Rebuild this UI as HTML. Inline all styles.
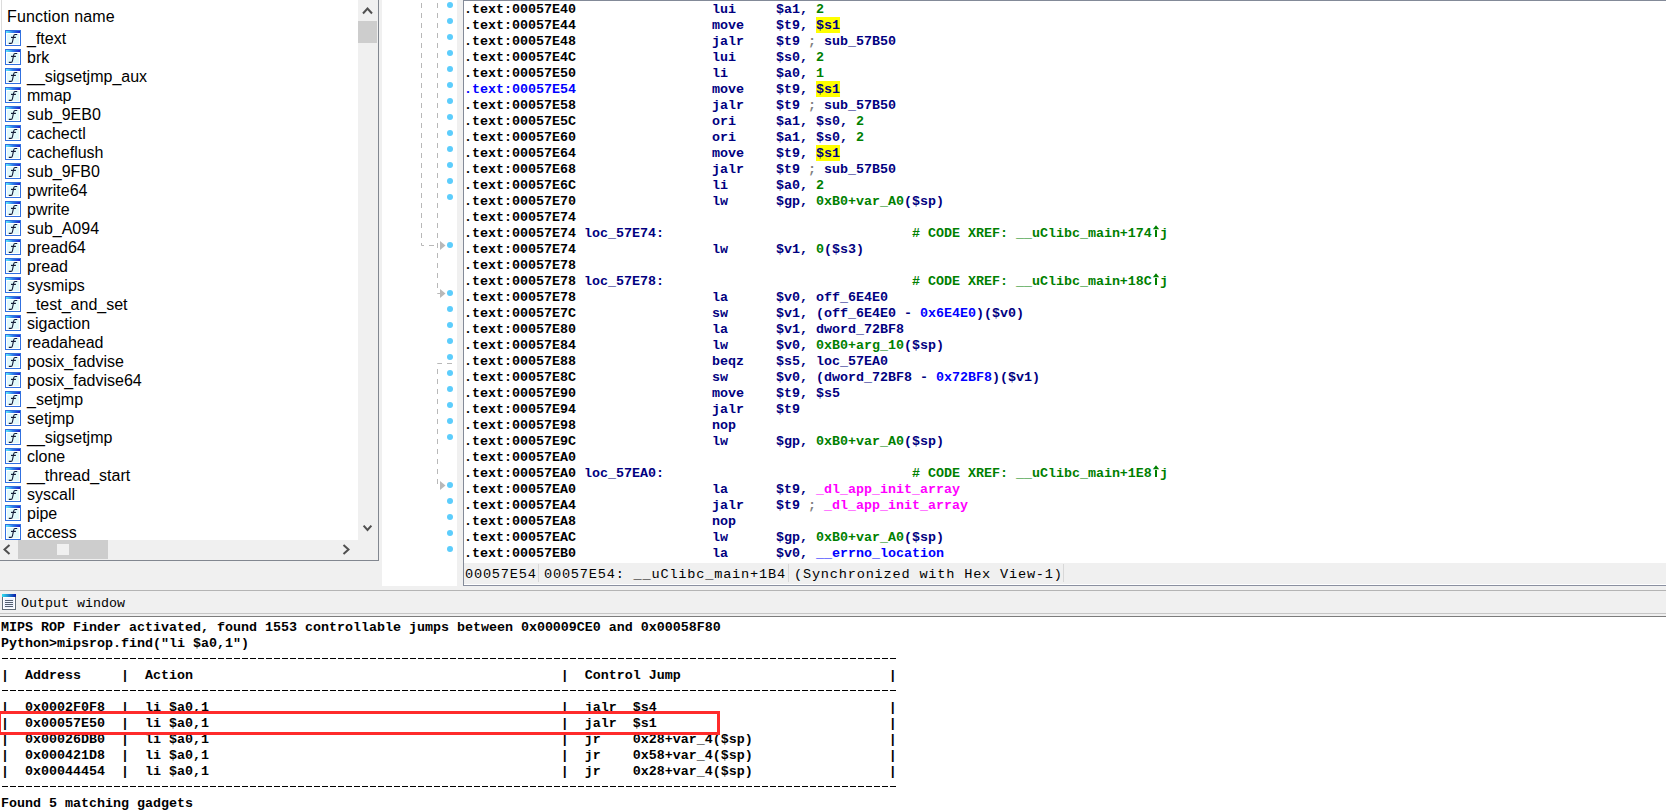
<!DOCTYPE html>
<html><head><meta charset="utf-8">
<style>
*{margin:0;padding:0;box-sizing:border-box}
html,body{width:1666px;height:812px;overflow:hidden;background:#f0f0f0;position:relative}
.abs{position:absolute}
/* left panel */
#lp{position:absolute;left:0;top:0;width:379px;height:561px;background:#f0f0f0;border-right:1px solid #828790;border-bottom:1px solid #828790}
#list{position:absolute;left:0;top:0;width:358px;height:540px;background:#fff;overflow:hidden;border-left:1px solid #e3e3e3;border-left-width:0}
#lborder{position:absolute;left:1px;top:0;width:1px;height:539px;background:#dcdcdc}
.fh{position:absolute;left:7px;top:7px;letter-spacing:0.15px;font:16px "Liberation Sans",sans-serif;color:#000;line-height:20px;white-space:pre}
.fi{position:absolute;left:5px;width:16px;height:16px}
.fi svg{display:block}
.ft{position:absolute;left:27px;font:16px "Liberation Sans",sans-serif;color:#000;line-height:19px;white-space:pre;margin-top:-1px}
#vsb{position:absolute;left:358px;top:0;width:20px;height:540px;background:#f0f0f0}
#vth{position:absolute;left:358px;top:21px;width:19px;height:22px;background:#cdcdcd}
#hsb{position:absolute;left:0;top:540px;width:358px;height:20px;background:#f0f0f0}
#hth{position:absolute;left:18px;top:540px;width:90px;height:19px;background:#cdcdcd}
#hsq{position:absolute;left:57px;top:544px;width:12px;height:11px;background:#f0f0f0}
/* graph area */
#graph{position:absolute;left:382px;top:0;width:75px;height:586px;background:#fff}
.dot{position:absolute;left:447px;width:6px;height:6px;border-radius:3px;background:#5ccdfc}
/* disasm */
#dis{position:absolute;left:463px;top:0;width:1203px;height:586px;background:#fff;border-left:1px solid #838a98;border-top:1px solid #838a98;border-bottom:1px solid #8a90a0}
.dr{position:absolute;left:464px;padding-top:1px;height:17px;font:bold 13.333px "Liberation Mono",monospace;line-height:16px;white-space:pre;color:#000}
.a{color:#000}.ca{color:#0000ff}.n{color:#000080}.g{color:#008000}.k{color:#808080}.b{color:#0000ff}.m{color:#ff00ff}.up{display:inline-block;width:8px;height:16px;vertical-align:top;margin-top:-1px}.up svg{display:block}
.y{background:#ffff00;color:#000080;padding-top:1px}
#sbar{position:absolute;left:464px;top:563px;width:1202px;height:21px;background:#f0f0f0}
.st{position:absolute;top:564px;height:22px;font:13.6px "Liberation Mono",monospace;letter-spacing:0.8px;line-height:22px;white-space:pre;color:#000}
.sdiv{position:absolute;top:564px;width:1px;height:18px;background:#d8d8d8}
/* output */
#l590{position:absolute;left:0;top:590px;width:1666px;height:1px;background:#b4b4b4}
#l613{position:absolute;left:0;top:613px;width:1666px;height:1px;background:#c6c6c6}
#l616{position:absolute;left:0;top:616px;width:1666px;height:1px;background:#7c7c7c}
#out{position:absolute;left:0;top:617px;width:1666px;height:195px;background:#fff}
.ot{position:absolute;left:21px;top:594px;font:13.333px "Liberation Mono",monospace;line-height:20px;white-space:pre;color:#000}
.or{position:absolute;left:1px;height:16px;font:bold 13.333px "Liberation Mono",monospace;line-height:16px;white-space:pre;color:#000}
.dash{position:absolute;left:2px;width:896px;height:1px;background:repeating-linear-gradient(to right,#000 0 6px,transparent 6px 8px)}
#red{position:absolute;left:-2px;top:711px;width:722px;height:24px;border:3px solid #ff2b2b}
</style></head><body>
<div id="lp"></div>
<div id="list"></div>
<div id="lborder"></div>
<div class="fh">Function name</div>
<div class="fi" style="top:30px"><svg width="16" height="16" viewBox="0 0 16 16"><defs><linearGradient id="tb" x1="0" x2="1"><stop offset="0" stop-color="#5ff0ff"/><stop offset="0.5" stop-color="#2a7ae8"/><stop offset="1" stop-color="#2222c8"/></linearGradient></defs><rect x="0" y="0" width="16" height="16" fill="#3070e0"/><rect x="1" y="1" width="14" height="2" fill="url(#tb)"/><rect x="1" y="3" width="14" height="12" fill="#fff"/><rect x="2" y="4" width="12" height="10" fill="#e2f9fb"/><path d="M12.2 4.5 H10 Q9 4.5 8.7 6 L7.4 12 Q7.1 13.4 6 13.4 H3.8" fill="none" stroke="#141c38" stroke-width="1.15"/><path d="M6 7.4 H10.9" stroke="#141c38" stroke-width="1.2"/></svg></div><div class="ft" style="top:30px">_ftext</div>
<div class="fi" style="top:49px"><svg width="16" height="16" viewBox="0 0 16 16"><defs><linearGradient id="tb" x1="0" x2="1"><stop offset="0" stop-color="#5ff0ff"/><stop offset="0.5" stop-color="#2a7ae8"/><stop offset="1" stop-color="#2222c8"/></linearGradient></defs><rect x="0" y="0" width="16" height="16" fill="#3070e0"/><rect x="1" y="1" width="14" height="2" fill="url(#tb)"/><rect x="1" y="3" width="14" height="12" fill="#fff"/><rect x="2" y="4" width="12" height="10" fill="#e2f9fb"/><path d="M12.2 4.5 H10 Q9 4.5 8.7 6 L7.4 12 Q7.1 13.4 6 13.4 H3.8" fill="none" stroke="#141c38" stroke-width="1.15"/><path d="M6 7.4 H10.9" stroke="#141c38" stroke-width="1.2"/></svg></div><div class="ft" style="top:49px">brk</div>
<div class="fi" style="top:68px"><svg width="16" height="16" viewBox="0 0 16 16"><defs><linearGradient id="tb" x1="0" x2="1"><stop offset="0" stop-color="#5ff0ff"/><stop offset="0.5" stop-color="#2a7ae8"/><stop offset="1" stop-color="#2222c8"/></linearGradient></defs><rect x="0" y="0" width="16" height="16" fill="#3070e0"/><rect x="1" y="1" width="14" height="2" fill="url(#tb)"/><rect x="1" y="3" width="14" height="12" fill="#fff"/><rect x="2" y="4" width="12" height="10" fill="#e2f9fb"/><path d="M12.2 4.5 H10 Q9 4.5 8.7 6 L7.4 12 Q7.1 13.4 6 13.4 H3.8" fill="none" stroke="#141c38" stroke-width="1.15"/><path d="M6 7.4 H10.9" stroke="#141c38" stroke-width="1.2"/></svg></div><div class="ft" style="top:68px">__sigsetjmp_aux</div>
<div class="fi" style="top:87px"><svg width="16" height="16" viewBox="0 0 16 16"><defs><linearGradient id="tb" x1="0" x2="1"><stop offset="0" stop-color="#5ff0ff"/><stop offset="0.5" stop-color="#2a7ae8"/><stop offset="1" stop-color="#2222c8"/></linearGradient></defs><rect x="0" y="0" width="16" height="16" fill="#3070e0"/><rect x="1" y="1" width="14" height="2" fill="url(#tb)"/><rect x="1" y="3" width="14" height="12" fill="#fff"/><rect x="2" y="4" width="12" height="10" fill="#e2f9fb"/><path d="M12.2 4.5 H10 Q9 4.5 8.7 6 L7.4 12 Q7.1 13.4 6 13.4 H3.8" fill="none" stroke="#141c38" stroke-width="1.15"/><path d="M6 7.4 H10.9" stroke="#141c38" stroke-width="1.2"/></svg></div><div class="ft" style="top:87px">mmap</div>
<div class="fi" style="top:106px"><svg width="16" height="16" viewBox="0 0 16 16"><defs><linearGradient id="tb" x1="0" x2="1"><stop offset="0" stop-color="#5ff0ff"/><stop offset="0.5" stop-color="#2a7ae8"/><stop offset="1" stop-color="#2222c8"/></linearGradient></defs><rect x="0" y="0" width="16" height="16" fill="#3070e0"/><rect x="1" y="1" width="14" height="2" fill="url(#tb)"/><rect x="1" y="3" width="14" height="12" fill="#fff"/><rect x="2" y="4" width="12" height="10" fill="#e2f9fb"/><path d="M12.2 4.5 H10 Q9 4.5 8.7 6 L7.4 12 Q7.1 13.4 6 13.4 H3.8" fill="none" stroke="#141c38" stroke-width="1.15"/><path d="M6 7.4 H10.9" stroke="#141c38" stroke-width="1.2"/></svg></div><div class="ft" style="top:106px">sub_9EB0</div>
<div class="fi" style="top:125px"><svg width="16" height="16" viewBox="0 0 16 16"><defs><linearGradient id="tb" x1="0" x2="1"><stop offset="0" stop-color="#5ff0ff"/><stop offset="0.5" stop-color="#2a7ae8"/><stop offset="1" stop-color="#2222c8"/></linearGradient></defs><rect x="0" y="0" width="16" height="16" fill="#3070e0"/><rect x="1" y="1" width="14" height="2" fill="url(#tb)"/><rect x="1" y="3" width="14" height="12" fill="#fff"/><rect x="2" y="4" width="12" height="10" fill="#e2f9fb"/><path d="M12.2 4.5 H10 Q9 4.5 8.7 6 L7.4 12 Q7.1 13.4 6 13.4 H3.8" fill="none" stroke="#141c38" stroke-width="1.15"/><path d="M6 7.4 H10.9" stroke="#141c38" stroke-width="1.2"/></svg></div><div class="ft" style="top:125px">cachectl</div>
<div class="fi" style="top:144px"><svg width="16" height="16" viewBox="0 0 16 16"><defs><linearGradient id="tb" x1="0" x2="1"><stop offset="0" stop-color="#5ff0ff"/><stop offset="0.5" stop-color="#2a7ae8"/><stop offset="1" stop-color="#2222c8"/></linearGradient></defs><rect x="0" y="0" width="16" height="16" fill="#3070e0"/><rect x="1" y="1" width="14" height="2" fill="url(#tb)"/><rect x="1" y="3" width="14" height="12" fill="#fff"/><rect x="2" y="4" width="12" height="10" fill="#e2f9fb"/><path d="M12.2 4.5 H10 Q9 4.5 8.7 6 L7.4 12 Q7.1 13.4 6 13.4 H3.8" fill="none" stroke="#141c38" stroke-width="1.15"/><path d="M6 7.4 H10.9" stroke="#141c38" stroke-width="1.2"/></svg></div><div class="ft" style="top:144px">cacheflush</div>
<div class="fi" style="top:163px"><svg width="16" height="16" viewBox="0 0 16 16"><defs><linearGradient id="tb" x1="0" x2="1"><stop offset="0" stop-color="#5ff0ff"/><stop offset="0.5" stop-color="#2a7ae8"/><stop offset="1" stop-color="#2222c8"/></linearGradient></defs><rect x="0" y="0" width="16" height="16" fill="#3070e0"/><rect x="1" y="1" width="14" height="2" fill="url(#tb)"/><rect x="1" y="3" width="14" height="12" fill="#fff"/><rect x="2" y="4" width="12" height="10" fill="#e2f9fb"/><path d="M12.2 4.5 H10 Q9 4.5 8.7 6 L7.4 12 Q7.1 13.4 6 13.4 H3.8" fill="none" stroke="#141c38" stroke-width="1.15"/><path d="M6 7.4 H10.9" stroke="#141c38" stroke-width="1.2"/></svg></div><div class="ft" style="top:163px">sub_9FB0</div>
<div class="fi" style="top:182px"><svg width="16" height="16" viewBox="0 0 16 16"><defs><linearGradient id="tb" x1="0" x2="1"><stop offset="0" stop-color="#5ff0ff"/><stop offset="0.5" stop-color="#2a7ae8"/><stop offset="1" stop-color="#2222c8"/></linearGradient></defs><rect x="0" y="0" width="16" height="16" fill="#3070e0"/><rect x="1" y="1" width="14" height="2" fill="url(#tb)"/><rect x="1" y="3" width="14" height="12" fill="#fff"/><rect x="2" y="4" width="12" height="10" fill="#e2f9fb"/><path d="M12.2 4.5 H10 Q9 4.5 8.7 6 L7.4 12 Q7.1 13.4 6 13.4 H3.8" fill="none" stroke="#141c38" stroke-width="1.15"/><path d="M6 7.4 H10.9" stroke="#141c38" stroke-width="1.2"/></svg></div><div class="ft" style="top:182px">pwrite64</div>
<div class="fi" style="top:201px"><svg width="16" height="16" viewBox="0 0 16 16"><defs><linearGradient id="tb" x1="0" x2="1"><stop offset="0" stop-color="#5ff0ff"/><stop offset="0.5" stop-color="#2a7ae8"/><stop offset="1" stop-color="#2222c8"/></linearGradient></defs><rect x="0" y="0" width="16" height="16" fill="#3070e0"/><rect x="1" y="1" width="14" height="2" fill="url(#tb)"/><rect x="1" y="3" width="14" height="12" fill="#fff"/><rect x="2" y="4" width="12" height="10" fill="#e2f9fb"/><path d="M12.2 4.5 H10 Q9 4.5 8.7 6 L7.4 12 Q7.1 13.4 6 13.4 H3.8" fill="none" stroke="#141c38" stroke-width="1.15"/><path d="M6 7.4 H10.9" stroke="#141c38" stroke-width="1.2"/></svg></div><div class="ft" style="top:201px">pwrite</div>
<div class="fi" style="top:220px"><svg width="16" height="16" viewBox="0 0 16 16"><defs><linearGradient id="tb" x1="0" x2="1"><stop offset="0" stop-color="#5ff0ff"/><stop offset="0.5" stop-color="#2a7ae8"/><stop offset="1" stop-color="#2222c8"/></linearGradient></defs><rect x="0" y="0" width="16" height="16" fill="#3070e0"/><rect x="1" y="1" width="14" height="2" fill="url(#tb)"/><rect x="1" y="3" width="14" height="12" fill="#fff"/><rect x="2" y="4" width="12" height="10" fill="#e2f9fb"/><path d="M12.2 4.5 H10 Q9 4.5 8.7 6 L7.4 12 Q7.1 13.4 6 13.4 H3.8" fill="none" stroke="#141c38" stroke-width="1.15"/><path d="M6 7.4 H10.9" stroke="#141c38" stroke-width="1.2"/></svg></div><div class="ft" style="top:220px">sub_A094</div>
<div class="fi" style="top:239px"><svg width="16" height="16" viewBox="0 0 16 16"><defs><linearGradient id="tb" x1="0" x2="1"><stop offset="0" stop-color="#5ff0ff"/><stop offset="0.5" stop-color="#2a7ae8"/><stop offset="1" stop-color="#2222c8"/></linearGradient></defs><rect x="0" y="0" width="16" height="16" fill="#3070e0"/><rect x="1" y="1" width="14" height="2" fill="url(#tb)"/><rect x="1" y="3" width="14" height="12" fill="#fff"/><rect x="2" y="4" width="12" height="10" fill="#e2f9fb"/><path d="M12.2 4.5 H10 Q9 4.5 8.7 6 L7.4 12 Q7.1 13.4 6 13.4 H3.8" fill="none" stroke="#141c38" stroke-width="1.15"/><path d="M6 7.4 H10.9" stroke="#141c38" stroke-width="1.2"/></svg></div><div class="ft" style="top:239px">pread64</div>
<div class="fi" style="top:258px"><svg width="16" height="16" viewBox="0 0 16 16"><defs><linearGradient id="tb" x1="0" x2="1"><stop offset="0" stop-color="#5ff0ff"/><stop offset="0.5" stop-color="#2a7ae8"/><stop offset="1" stop-color="#2222c8"/></linearGradient></defs><rect x="0" y="0" width="16" height="16" fill="#3070e0"/><rect x="1" y="1" width="14" height="2" fill="url(#tb)"/><rect x="1" y="3" width="14" height="12" fill="#fff"/><rect x="2" y="4" width="12" height="10" fill="#e2f9fb"/><path d="M12.2 4.5 H10 Q9 4.5 8.7 6 L7.4 12 Q7.1 13.4 6 13.4 H3.8" fill="none" stroke="#141c38" stroke-width="1.15"/><path d="M6 7.4 H10.9" stroke="#141c38" stroke-width="1.2"/></svg></div><div class="ft" style="top:258px">pread</div>
<div class="fi" style="top:277px"><svg width="16" height="16" viewBox="0 0 16 16"><defs><linearGradient id="tb" x1="0" x2="1"><stop offset="0" stop-color="#5ff0ff"/><stop offset="0.5" stop-color="#2a7ae8"/><stop offset="1" stop-color="#2222c8"/></linearGradient></defs><rect x="0" y="0" width="16" height="16" fill="#3070e0"/><rect x="1" y="1" width="14" height="2" fill="url(#tb)"/><rect x="1" y="3" width="14" height="12" fill="#fff"/><rect x="2" y="4" width="12" height="10" fill="#e2f9fb"/><path d="M12.2 4.5 H10 Q9 4.5 8.7 6 L7.4 12 Q7.1 13.4 6 13.4 H3.8" fill="none" stroke="#141c38" stroke-width="1.15"/><path d="M6 7.4 H10.9" stroke="#141c38" stroke-width="1.2"/></svg></div><div class="ft" style="top:277px">sysmips</div>
<div class="fi" style="top:296px"><svg width="16" height="16" viewBox="0 0 16 16"><defs><linearGradient id="tb" x1="0" x2="1"><stop offset="0" stop-color="#5ff0ff"/><stop offset="0.5" stop-color="#2a7ae8"/><stop offset="1" stop-color="#2222c8"/></linearGradient></defs><rect x="0" y="0" width="16" height="16" fill="#3070e0"/><rect x="1" y="1" width="14" height="2" fill="url(#tb)"/><rect x="1" y="3" width="14" height="12" fill="#fff"/><rect x="2" y="4" width="12" height="10" fill="#e2f9fb"/><path d="M12.2 4.5 H10 Q9 4.5 8.7 6 L7.4 12 Q7.1 13.4 6 13.4 H3.8" fill="none" stroke="#141c38" stroke-width="1.15"/><path d="M6 7.4 H10.9" stroke="#141c38" stroke-width="1.2"/></svg></div><div class="ft" style="top:296px">_test_and_set</div>
<div class="fi" style="top:315px"><svg width="16" height="16" viewBox="0 0 16 16"><defs><linearGradient id="tb" x1="0" x2="1"><stop offset="0" stop-color="#5ff0ff"/><stop offset="0.5" stop-color="#2a7ae8"/><stop offset="1" stop-color="#2222c8"/></linearGradient></defs><rect x="0" y="0" width="16" height="16" fill="#3070e0"/><rect x="1" y="1" width="14" height="2" fill="url(#tb)"/><rect x="1" y="3" width="14" height="12" fill="#fff"/><rect x="2" y="4" width="12" height="10" fill="#e2f9fb"/><path d="M12.2 4.5 H10 Q9 4.5 8.7 6 L7.4 12 Q7.1 13.4 6 13.4 H3.8" fill="none" stroke="#141c38" stroke-width="1.15"/><path d="M6 7.4 H10.9" stroke="#141c38" stroke-width="1.2"/></svg></div><div class="ft" style="top:315px">sigaction</div>
<div class="fi" style="top:334px"><svg width="16" height="16" viewBox="0 0 16 16"><defs><linearGradient id="tb" x1="0" x2="1"><stop offset="0" stop-color="#5ff0ff"/><stop offset="0.5" stop-color="#2a7ae8"/><stop offset="1" stop-color="#2222c8"/></linearGradient></defs><rect x="0" y="0" width="16" height="16" fill="#3070e0"/><rect x="1" y="1" width="14" height="2" fill="url(#tb)"/><rect x="1" y="3" width="14" height="12" fill="#fff"/><rect x="2" y="4" width="12" height="10" fill="#e2f9fb"/><path d="M12.2 4.5 H10 Q9 4.5 8.7 6 L7.4 12 Q7.1 13.4 6 13.4 H3.8" fill="none" stroke="#141c38" stroke-width="1.15"/><path d="M6 7.4 H10.9" stroke="#141c38" stroke-width="1.2"/></svg></div><div class="ft" style="top:334px">readahead</div>
<div class="fi" style="top:353px"><svg width="16" height="16" viewBox="0 0 16 16"><defs><linearGradient id="tb" x1="0" x2="1"><stop offset="0" stop-color="#5ff0ff"/><stop offset="0.5" stop-color="#2a7ae8"/><stop offset="1" stop-color="#2222c8"/></linearGradient></defs><rect x="0" y="0" width="16" height="16" fill="#3070e0"/><rect x="1" y="1" width="14" height="2" fill="url(#tb)"/><rect x="1" y="3" width="14" height="12" fill="#fff"/><rect x="2" y="4" width="12" height="10" fill="#e2f9fb"/><path d="M12.2 4.5 H10 Q9 4.5 8.7 6 L7.4 12 Q7.1 13.4 6 13.4 H3.8" fill="none" stroke="#141c38" stroke-width="1.15"/><path d="M6 7.4 H10.9" stroke="#141c38" stroke-width="1.2"/></svg></div><div class="ft" style="top:353px">posix_fadvise</div>
<div class="fi" style="top:372px"><svg width="16" height="16" viewBox="0 0 16 16"><defs><linearGradient id="tb" x1="0" x2="1"><stop offset="0" stop-color="#5ff0ff"/><stop offset="0.5" stop-color="#2a7ae8"/><stop offset="1" stop-color="#2222c8"/></linearGradient></defs><rect x="0" y="0" width="16" height="16" fill="#3070e0"/><rect x="1" y="1" width="14" height="2" fill="url(#tb)"/><rect x="1" y="3" width="14" height="12" fill="#fff"/><rect x="2" y="4" width="12" height="10" fill="#e2f9fb"/><path d="M12.2 4.5 H10 Q9 4.5 8.7 6 L7.4 12 Q7.1 13.4 6 13.4 H3.8" fill="none" stroke="#141c38" stroke-width="1.15"/><path d="M6 7.4 H10.9" stroke="#141c38" stroke-width="1.2"/></svg></div><div class="ft" style="top:372px">posix_fadvise64</div>
<div class="fi" style="top:391px"><svg width="16" height="16" viewBox="0 0 16 16"><defs><linearGradient id="tb" x1="0" x2="1"><stop offset="0" stop-color="#5ff0ff"/><stop offset="0.5" stop-color="#2a7ae8"/><stop offset="1" stop-color="#2222c8"/></linearGradient></defs><rect x="0" y="0" width="16" height="16" fill="#3070e0"/><rect x="1" y="1" width="14" height="2" fill="url(#tb)"/><rect x="1" y="3" width="14" height="12" fill="#fff"/><rect x="2" y="4" width="12" height="10" fill="#e2f9fb"/><path d="M12.2 4.5 H10 Q9 4.5 8.7 6 L7.4 12 Q7.1 13.4 6 13.4 H3.8" fill="none" stroke="#141c38" stroke-width="1.15"/><path d="M6 7.4 H10.9" stroke="#141c38" stroke-width="1.2"/></svg></div><div class="ft" style="top:391px">_setjmp</div>
<div class="fi" style="top:410px"><svg width="16" height="16" viewBox="0 0 16 16"><defs><linearGradient id="tb" x1="0" x2="1"><stop offset="0" stop-color="#5ff0ff"/><stop offset="0.5" stop-color="#2a7ae8"/><stop offset="1" stop-color="#2222c8"/></linearGradient></defs><rect x="0" y="0" width="16" height="16" fill="#3070e0"/><rect x="1" y="1" width="14" height="2" fill="url(#tb)"/><rect x="1" y="3" width="14" height="12" fill="#fff"/><rect x="2" y="4" width="12" height="10" fill="#e2f9fb"/><path d="M12.2 4.5 H10 Q9 4.5 8.7 6 L7.4 12 Q7.1 13.4 6 13.4 H3.8" fill="none" stroke="#141c38" stroke-width="1.15"/><path d="M6 7.4 H10.9" stroke="#141c38" stroke-width="1.2"/></svg></div><div class="ft" style="top:410px">setjmp</div>
<div class="fi" style="top:429px"><svg width="16" height="16" viewBox="0 0 16 16"><defs><linearGradient id="tb" x1="0" x2="1"><stop offset="0" stop-color="#5ff0ff"/><stop offset="0.5" stop-color="#2a7ae8"/><stop offset="1" stop-color="#2222c8"/></linearGradient></defs><rect x="0" y="0" width="16" height="16" fill="#3070e0"/><rect x="1" y="1" width="14" height="2" fill="url(#tb)"/><rect x="1" y="3" width="14" height="12" fill="#fff"/><rect x="2" y="4" width="12" height="10" fill="#e2f9fb"/><path d="M12.2 4.5 H10 Q9 4.5 8.7 6 L7.4 12 Q7.1 13.4 6 13.4 H3.8" fill="none" stroke="#141c38" stroke-width="1.15"/><path d="M6 7.4 H10.9" stroke="#141c38" stroke-width="1.2"/></svg></div><div class="ft" style="top:429px">__sigsetjmp</div>
<div class="fi" style="top:448px"><svg width="16" height="16" viewBox="0 0 16 16"><defs><linearGradient id="tb" x1="0" x2="1"><stop offset="0" stop-color="#5ff0ff"/><stop offset="0.5" stop-color="#2a7ae8"/><stop offset="1" stop-color="#2222c8"/></linearGradient></defs><rect x="0" y="0" width="16" height="16" fill="#3070e0"/><rect x="1" y="1" width="14" height="2" fill="url(#tb)"/><rect x="1" y="3" width="14" height="12" fill="#fff"/><rect x="2" y="4" width="12" height="10" fill="#e2f9fb"/><path d="M12.2 4.5 H10 Q9 4.5 8.7 6 L7.4 12 Q7.1 13.4 6 13.4 H3.8" fill="none" stroke="#141c38" stroke-width="1.15"/><path d="M6 7.4 H10.9" stroke="#141c38" stroke-width="1.2"/></svg></div><div class="ft" style="top:448px">clone</div>
<div class="fi" style="top:467px"><svg width="16" height="16" viewBox="0 0 16 16"><defs><linearGradient id="tb" x1="0" x2="1"><stop offset="0" stop-color="#5ff0ff"/><stop offset="0.5" stop-color="#2a7ae8"/><stop offset="1" stop-color="#2222c8"/></linearGradient></defs><rect x="0" y="0" width="16" height="16" fill="#3070e0"/><rect x="1" y="1" width="14" height="2" fill="url(#tb)"/><rect x="1" y="3" width="14" height="12" fill="#fff"/><rect x="2" y="4" width="12" height="10" fill="#e2f9fb"/><path d="M12.2 4.5 H10 Q9 4.5 8.7 6 L7.4 12 Q7.1 13.4 6 13.4 H3.8" fill="none" stroke="#141c38" stroke-width="1.15"/><path d="M6 7.4 H10.9" stroke="#141c38" stroke-width="1.2"/></svg></div><div class="ft" style="top:467px">__thread_start</div>
<div class="fi" style="top:486px"><svg width="16" height="16" viewBox="0 0 16 16"><defs><linearGradient id="tb" x1="0" x2="1"><stop offset="0" stop-color="#5ff0ff"/><stop offset="0.5" stop-color="#2a7ae8"/><stop offset="1" stop-color="#2222c8"/></linearGradient></defs><rect x="0" y="0" width="16" height="16" fill="#3070e0"/><rect x="1" y="1" width="14" height="2" fill="url(#tb)"/><rect x="1" y="3" width="14" height="12" fill="#fff"/><rect x="2" y="4" width="12" height="10" fill="#e2f9fb"/><path d="M12.2 4.5 H10 Q9 4.5 8.7 6 L7.4 12 Q7.1 13.4 6 13.4 H3.8" fill="none" stroke="#141c38" stroke-width="1.15"/><path d="M6 7.4 H10.9" stroke="#141c38" stroke-width="1.2"/></svg></div><div class="ft" style="top:486px">syscall</div>
<div class="fi" style="top:505px"><svg width="16" height="16" viewBox="0 0 16 16"><defs><linearGradient id="tb" x1="0" x2="1"><stop offset="0" stop-color="#5ff0ff"/><stop offset="0.5" stop-color="#2a7ae8"/><stop offset="1" stop-color="#2222c8"/></linearGradient></defs><rect x="0" y="0" width="16" height="16" fill="#3070e0"/><rect x="1" y="1" width="14" height="2" fill="url(#tb)"/><rect x="1" y="3" width="14" height="12" fill="#fff"/><rect x="2" y="4" width="12" height="10" fill="#e2f9fb"/><path d="M12.2 4.5 H10 Q9 4.5 8.7 6 L7.4 12 Q7.1 13.4 6 13.4 H3.8" fill="none" stroke="#141c38" stroke-width="1.15"/><path d="M6 7.4 H10.9" stroke="#141c38" stroke-width="1.2"/></svg></div><div class="ft" style="top:505px">pipe</div>
<div class="fi" style="top:524px"><svg width="16" height="16" viewBox="0 0 16 16"><defs><linearGradient id="tb" x1="0" x2="1"><stop offset="0" stop-color="#5ff0ff"/><stop offset="0.5" stop-color="#2a7ae8"/><stop offset="1" stop-color="#2222c8"/></linearGradient></defs><rect x="0" y="0" width="16" height="16" fill="#3070e0"/><rect x="1" y="1" width="14" height="2" fill="url(#tb)"/><rect x="1" y="3" width="14" height="12" fill="#fff"/><rect x="2" y="4" width="12" height="10" fill="#e2f9fb"/><path d="M12.2 4.5 H10 Q9 4.5 8.7 6 L7.4 12 Q7.1 13.4 6 13.4 H3.8" fill="none" stroke="#141c38" stroke-width="1.15"/><path d="M6 7.4 H10.9" stroke="#141c38" stroke-width="1.2"/></svg></div><div class="ft" style="top:524px">access</div>
<div id="vsb"></div>
<div id="vth"></div>
<svg class="abs" style="left:362px;top:6px" width="11" height="9" viewBox="0 0 11 9"><path d="M1 7.5 L5.5 2.5 L10 7.5" fill="none" stroke="#505050" stroke-width="2"/></svg>
<svg class="abs" style="left:362px;top:524px" width="11" height="9" viewBox="0 0 11 9"><path d="M1.6 1.6 L5.5 6 L9.4 1.6" fill="none" stroke="#505050" stroke-width="2"/></svg>
<div id="hsb"></div>
<div id="hth"></div>
<div id="hsq"></div>
<svg class="abs" style="left:2px;top:544px" width="9" height="11" viewBox="0 0 9 11"><path d="M7.5 1 L2.5 5.5 L7.5 10" fill="none" stroke="#505050" stroke-width="2"/></svg>
<svg class="abs" style="left:342px;top:544px" width="9" height="11" viewBox="0 0 9 11"><path d="M1.5 1 L6.5 5.5 L1.5 10" fill="none" stroke="#505050" stroke-width="2"/></svg>

<div id="graph"></div>
<svg class="abs" style="left:382px;top:0" width="75" height="586" viewBox="382 0 75 586">
<g stroke="#b8b8b8" stroke-width="1" fill="none">
<path d="M421.5 3 V245.5 H437" stroke-dasharray="5 5"/>
<path d="M437.5 3 V293.5 H440" stroke-dasharray="5 5"/>
<path d="M452 363.5 H437.5 V485.5 H440" stroke-dasharray="5 5"/>
</g>
<g fill="#b8b8b8">
<path d="M440 241 L445.5 245.5 L440 250 Z"/>
<path d="M440 289 L445.5 293.5 L440 298 Z"/>
<path d="M440 481 L445.5 485.5 L440 490 Z"/>
</g>
</svg>
<div class="dot" style="top:2px"></div>
<div class="dot" style="top:18px"></div>
<div class="dot" style="top:34px"></div>
<div class="dot" style="top:50px"></div>
<div class="dot" style="top:66px"></div>
<div class="dot" style="top:82px"></div>
<div class="dot" style="top:98px"></div>
<div class="dot" style="top:114px"></div>
<div class="dot" style="top:130px"></div>
<div class="dot" style="top:146px"></div>
<div class="dot" style="top:162px"></div>
<div class="dot" style="top:178px"></div>
<div class="dot" style="top:194px"></div>
<div class="dot" style="top:242px"></div>
<div class="dot" style="top:290px"></div>
<div class="dot" style="top:306px"></div>
<div class="dot" style="top:322px"></div>
<div class="dot" style="top:338px"></div>
<div class="dot" style="top:354px"></div>
<div class="dot" style="top:370px"></div>
<div class="dot" style="top:386px"></div>
<div class="dot" style="top:402px"></div>
<div class="dot" style="top:418px"></div>
<div class="dot" style="top:434px"></div>
<div class="dot" style="top:482px"></div>
<div class="dot" style="top:498px"></div>
<div class="dot" style="top:514px"></div>
<div class="dot" style="top:530px"></div>
<div class="dot" style="top:546px"></div>
<div id="dis"></div>
<div class="dr" style="top:1px"><span class="a">.text:00057E40</span>                 <span class="n">lui     </span><span class="n">$a1, </span><span class="g">2</span></div>
<div class="dr" style="top:17px"><span class="a">.text:00057E44</span>                 <span class="n">move    </span><span class="n">$t9, </span><span class="y">$s1</span></div>
<div class="dr" style="top:33px"><span class="a">.text:00057E48</span>                 <span class="n">jalr    </span><span class="n">$t9 </span><span class="k">;</span><span class="n"> sub_57B50</span></div>
<div class="dr" style="top:49px"><span class="a">.text:00057E4C</span>                 <span class="n">lui     </span><span class="n">$s0, </span><span class="g">2</span></div>
<div class="dr" style="top:65px"><span class="a">.text:00057E50</span>                 <span class="n">li      </span><span class="n">$a0, </span><span class="g">1</span></div>
<div class="dr" style="top:81px"><span class="ca">.text:00057E54</span>                 <span class="n">move    </span><span class="n">$t9, </span><span class="y">$s1</span></div>
<div class="dr" style="top:97px"><span class="a">.text:00057E58</span>                 <span class="n">jalr    </span><span class="n">$t9 </span><span class="k">;</span><span class="n"> sub_57B50</span></div>
<div class="dr" style="top:113px"><span class="a">.text:00057E5C</span>                 <span class="n">ori     </span><span class="n">$a1, $s0, </span><span class="g">2</span></div>
<div class="dr" style="top:129px"><span class="a">.text:00057E60</span>                 <span class="n">ori     </span><span class="n">$a1, $s0, </span><span class="g">2</span></div>
<div class="dr" style="top:145px"><span class="a">.text:00057E64</span>                 <span class="n">move    </span><span class="n">$t9, </span><span class="y">$s1</span></div>
<div class="dr" style="top:161px"><span class="a">.text:00057E68</span>                 <span class="n">jalr    </span><span class="n">$t9 </span><span class="k">;</span><span class="n"> sub_57B50</span></div>
<div class="dr" style="top:177px"><span class="a">.text:00057E6C</span>                 <span class="n">li      </span><span class="n">$a0, </span><span class="g">2</span></div>
<div class="dr" style="top:193px"><span class="a">.text:00057E70</span>                 <span class="n">lw      </span><span class="n">$gp, </span><span class="g">0xB0+var_A0</span><span class="n">($sp)</span></div>
<div class="dr" style="top:209px"><span class="a">.text:00057E74</span></div>
<div class="dr" style="top:225px"><span class="a">.text:00057E74</span> <span class="n">loc_57E74:</span>                               <span class="g"># CODE XREF: __uClibc_main+174</span><span class="up"><svg width="8" height="16" viewBox="0 0 8 16"><path d="M4 0.3 L7.2 4.3 H0.8 Z" fill="#008000"/><rect x="3" y="5" width="2" height="7" fill="#008000"/></svg></span><span class="g">j</span></div>
<div class="dr" style="top:241px"><span class="a">.text:00057E74</span>                 <span class="n">lw      </span><span class="n">$v1, </span><span class="g">0</span><span class="n">($s3)</span></div>
<div class="dr" style="top:257px"><span class="a">.text:00057E78</span></div>
<div class="dr" style="top:273px"><span class="a">.text:00057E78</span> <span class="n">loc_57E78:</span>                               <span class="g"># CODE XREF: __uClibc_main+18C</span><span class="up"><svg width="8" height="16" viewBox="0 0 8 16"><path d="M4 0.3 L7.2 4.3 H0.8 Z" fill="#008000"/><rect x="3" y="5" width="2" height="7" fill="#008000"/></svg></span><span class="g">j</span></div>
<div class="dr" style="top:289px"><span class="a">.text:00057E78</span>                 <span class="n">la      </span><span class="n">$v0, off_6E4E0</span></div>
<div class="dr" style="top:305px"><span class="a">.text:00057E7C</span>                 <span class="n">sw      </span><span class="n">$v1, (off_6E4E0 - </span><span class="b">0x6E4E0</span><span class="n">)($v0)</span></div>
<div class="dr" style="top:321px"><span class="a">.text:00057E80</span>                 <span class="n">la      </span><span class="n">$v1, dword_72BF8</span></div>
<div class="dr" style="top:337px"><span class="a">.text:00057E84</span>                 <span class="n">lw      </span><span class="n">$v0, </span><span class="g">0xB0+arg_10</span><span class="n">($sp)</span></div>
<div class="dr" style="top:353px"><span class="a">.text:00057E88</span>                 <span class="n">beqz    </span><span class="n">$s5, loc_57EA0</span></div>
<div class="dr" style="top:369px"><span class="a">.text:00057E8C</span>                 <span class="n">sw      </span><span class="n">$v0, (dword_72BF8 - </span><span class="b">0x72BF8</span><span class="n">)($v1)</span></div>
<div class="dr" style="top:385px"><span class="a">.text:00057E90</span>                 <span class="n">move    </span><span class="n">$t9, $s5</span></div>
<div class="dr" style="top:401px"><span class="a">.text:00057E94</span>                 <span class="n">jalr    </span><span class="n">$t9</span></div>
<div class="dr" style="top:417px"><span class="a">.text:00057E98</span>                 <span class="n">nop     </span></div>
<div class="dr" style="top:433px"><span class="a">.text:00057E9C</span>                 <span class="n">lw      </span><span class="n">$gp, </span><span class="g">0xB0+var_A0</span><span class="n">($sp)</span></div>
<div class="dr" style="top:449px"><span class="a">.text:00057EA0</span></div>
<div class="dr" style="top:465px"><span class="a">.text:00057EA0</span> <span class="n">loc_57EA0:</span>                               <span class="g"># CODE XREF: __uClibc_main+1E8</span><span class="up"><svg width="8" height="16" viewBox="0 0 8 16"><path d="M4 0.3 L7.2 4.3 H0.8 Z" fill="#008000"/><rect x="3" y="5" width="2" height="7" fill="#008000"/></svg></span><span class="g">j</span></div>
<div class="dr" style="top:481px"><span class="a">.text:00057EA0</span>                 <span class="n">la      </span><span class="n">$t9, </span><span class="m">_dl_app_init_array</span></div>
<div class="dr" style="top:497px"><span class="a">.text:00057EA4</span>                 <span class="n">jalr    </span><span class="n">$t9 </span><span class="k">;</span><span class="n"> </span><span class="m">_dl_app_init_array</span></div>
<div class="dr" style="top:513px"><span class="a">.text:00057EA8</span>                 <span class="n">nop     </span></div>
<div class="dr" style="top:529px"><span class="a">.text:00057EAC</span>                 <span class="n">lw      </span><span class="n">$gp, </span><span class="g">0xB0+var_A0</span><span class="n">($sp)</span></div>
<div class="dr" style="top:545px"><span class="a">.text:00057EB0</span>                 <span class="n">la      </span><span class="n">$v0, </span><span class="b">__errno_location</span></div>
<div id="sbar"></div>
<div class="st" style="left:465px">00057E54</div>
<div class="sdiv" style="left:538px"></div>
<div class="st" style="left:544px">00057E54: __uClibc_main+1B4</div>
<div class="sdiv" style="left:788px"></div>
<div class="st" style="left:794px">(Synchronized with Hex View-1)</div>
<div class="sdiv" style="left:1063px"></div>

<div id="l590"></div>
<svg class="abs" style="left:2px;top:594px" width="14" height="16" viewBox="0 0 14 16"><defs><linearGradient id="ob" x1="0" x2="1"><stop offset="0" stop-color="#2ee0f0"/><stop offset="1" stop-color="#0a1aa8"/></linearGradient></defs><rect x="0.5" y="0.5" width="13" height="15" fill="#fff" stroke="#5f6b78"/><rect x="0" y="0" width="14" height="3" fill="url(#ob)"/><rect x="2" y="4" width="10" height="10" fill="#eef3ff"/><g stroke="#556070" stroke-width="1"><path d="M3 6.5H11M3 8.5H11M3 10.5H11M3 12.5H11"/></g></svg>
<div class="ot">Output window</div>
<div id="l613"></div>
<div id="l616"></div>
<div id="out"></div>
<div class="or" style="top:620px">MIPS ROP Finder activated, found 1553 controllable jumps between 0x00009CE0 and 0x00058F80</div>
<div class="or" style="top:636px">Python&gt;mipsrop.find("li $a0,1")</div>
<div class="dash" style="top:658px"></div>
<div class="or" style="top:668px">|  Address     |  Action                                              |  Control Jump                          |</div>
<div class="dash" style="top:690px"></div>
<div class="or" style="top:700px">|  0x0002F0F8  |  li $a0,1                                            |  jalr  $s4                             |</div>
<div class="or" style="top:716px">|  0x00057E50  |  li $a0,1                                            |  jalr  $s1                             |</div>
<div class="or" style="top:732px">|  0x00026DB0  |  li $a0,1                                            |  jr    0x28+var_4($sp)                 |</div>
<div class="or" style="top:748px">|  0x000421D8  |  li $a0,1                                            |  jr    0x58+var_4($sp)                 |</div>
<div class="or" style="top:764px">|  0x00044454  |  li $a0,1                                            |  jr    0x28+var_4($sp)                 |</div>
<div class="dash" style="top:786px"></div>
<div class="or" style="top:796px">Found 5 matching gadgets</div>
<div id="red"></div>
</body></html>
